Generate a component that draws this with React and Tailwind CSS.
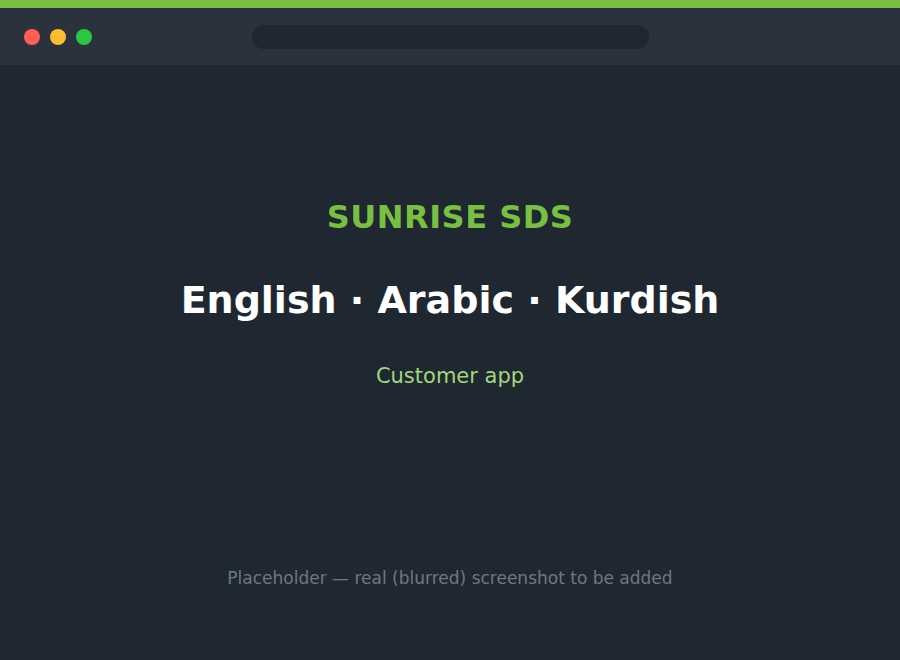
import React from 'react';

const font = { fontFamily: '"DejaVu Sans", "Liberation Sans", sans-serif' };

const TrafficLights = () => (
  <div className="flex items-center gap-[10px]">
    <span className="w-4 h-4 rounded-full bg-[#ff5f57]" />
    <span className="w-4 h-4 rounded-full bg-[#febc2e]" />
    <span className="w-4 h-4 rounded-full bg-[#28c840]" />
  </div>
);

export default function App() {
  return (
    <div className="w-[900px] h-[660px] flex flex-col bg-[#1f2731] overflow-hidden" style={font}>
      <div className="h-2 bg-[#78bf42]" />
      <div className="h-[57px] flex items-center px-6 bg-[#2b323e]">
        <TrafficLights />
        <div className="ml-[160px] w-[397px] h-6 rounded-full bg-[#1f2731]" />
      </div>
      <main className="flex-1 flex flex-col items-center pt-[133px]">
        <h1 className="text-[32px] leading-[38px] font-bold text-[#78bf42] tracking-[0.5px]">SUNRISE SDS</h1>
        <h2 className="mt-[41px] text-[38px] leading-[46px] font-bold text-white">English · Arabic · Kurdish</h2>
        <p className="mt-[39px] text-[21px] leading-[28px] text-[#a2d67c]">Customer app</p>
        <p className="mt-[176px] text-[17px] leading-[24px] text-[#6f7781]">
          Placeholder — real (blurred) screenshot to be added
        </p>
      </main>
    </div>
  );
}
